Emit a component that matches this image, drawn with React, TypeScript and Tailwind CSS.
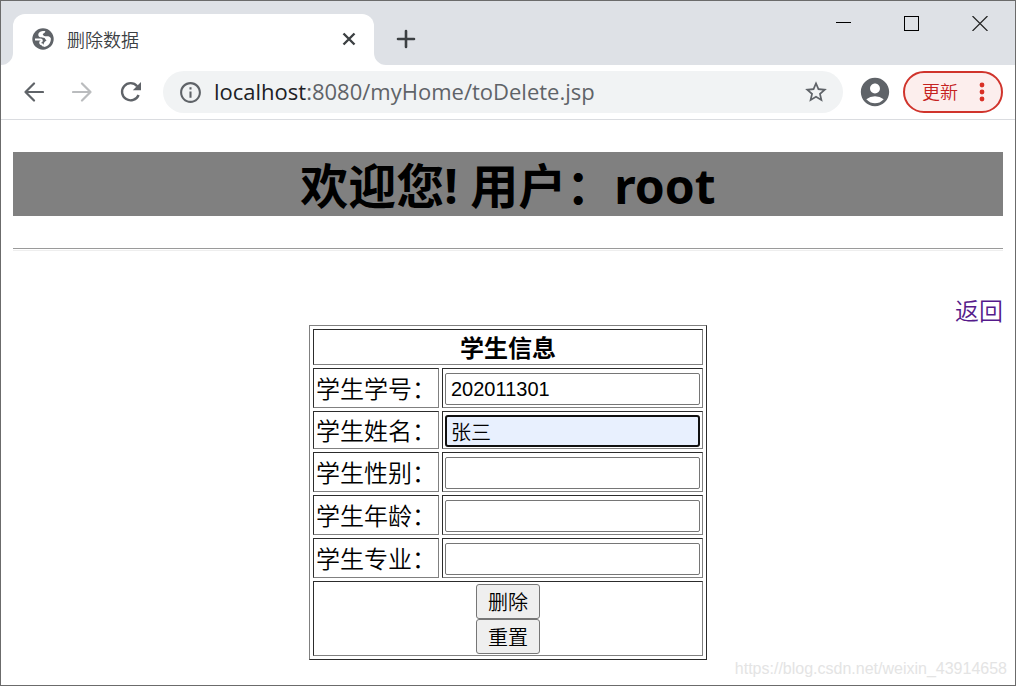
import React from 'react';
import { MdAccountCircle, MdInfoOutline, MdStarBorder } from 'react-icons/md';

interface Field {
  id: string;
  label: string;
  value: string;
  focused?: boolean;
}

const fields: Field[] = [
  { id: 'sno', label: '学生学号：', value: '202011301' },
  { id: 'sname', label: '学生姓名：', value: '张三', focused: true },
  { id: 'ssex', label: '学生性别：', value: '' },
  { id: 'sage', label: '学生年龄：', value: '' },
  { id: 'smajor', label: '学生专业：', value: '' },
];

const GlobeIcon = () => (
  <svg width="22" height="22" viewBox="0 0 22 22" aria-hidden="true">
    <circle cx="11" cy="11" r="10.7" fill="#5f6368" />
    <path d="M13.300 3.200C10 2.600 6.200 4.200 6.300 6.900C6.400 9.400 9.800 9.300 12 9.700C13.600 10 13 11.800 14.600 12.200C13.600 13.600 11.800 13.800 11.700 16L11.600 18.900C15.800 18.700 19 15.200 18.900 10.500C18.300 8.600 16.500 8.200 14.600 8.300C13 8.300 11 7.600 10.800 6.400C10.700 5 13.200 5.400 13.300 3.200Z" fill="#fff" />
    <path d="M2.900 10.600H8.400C10.400 10.600 11.300 12 10.600 13.400C10 14.400 8.600 14 8.600 15.200C8.700 16.600 10.400 16.300 10.600 18.900C6.200 18.700 2.800 15 2.900 10.600Z" fill="#5f6368" />
    <path d="M3 11.500H8.600C10.200 11.600 10.200 13.300 8.800 13.700C7.600 14.200 8.200 16 9.800 16.300L11.700 18" fill="none" stroke="#fff" strokeWidth="2" />
  </svg>
);

const ArrowIcon = ({ className }: { className: string }) => (
  <svg className={className} width="20" height="20" viewBox="0 0 20 20" fill="none" stroke="currentColor" strokeWidth="2.200" strokeLinecap="round" strokeLinejoin="round" aria-hidden="true">
    <path d="M19 10H1.500M10 1.500L1.500 10L10 18.500" />
  </svg>
);

const ReloadIcon = () => (
  <svg width="22" height="22" viewBox="0 0 22 22" aria-hidden="true">
    <path d="M17.200 5.200A8.600 8.600 0 1 0 18.600 14" fill="none" stroke="#5f6368" strokeWidth="2.400" />
    <path d="M21 1V9.200H12.800Z" fill="#5f6368" />
  </svg>
);

const TabStrip = () => (
  <header className="flex h-16 items-end bg-[#dee1e6]">
    <div className="relative ml-3 flex h-[51px] w-[361px] items-center rounded-t-xl bg-white pr-4 pb-0.5 pl-[19px]">
      <svg className="absolute bottom-0 -left-3" width="12" height="12" viewBox="0 0 12 12" aria-hidden="true">
        <path d="M12 0V12H0A12 12 0 0 0 12 0Z" fill="#fff" />
      </svg>
      <svg className="absolute -right-3 bottom-0" width="12" height="12" viewBox="0 0 12 12" aria-hidden="true">
        <path d="M0 0V12H12A12 12 0 0 1 0 0Z" fill="#fff" />
      </svg>
      <GlobeIcon />
      <span className="ml-[13px] flex-1 pt-0.5 text-lg font-[350] text-[#3c4043]">删除数据</span>
      <button type="button" aria-label="关闭标签页" className="p-0.5">
        <svg width="14" height="14" viewBox="0 0 14 14" stroke="#3c4043" strokeWidth="2.4" aria-hidden="true">
          <path d="M1.500 1.500L12.500 12.500M12.500 1.500L1.500 12.500" />
        </svg>
      </button>
    </div>
    <button type="button" aria-label="新标签页" className="ml-[21px] flex h-[51px] items-center pb-0.5">
      <svg width="22" height="22" viewBox="0 0 22 22" stroke="#3c4043" strokeWidth="2.600" strokeLinecap="round" aria-hidden="true">
        <path d="M11 3V19M3 11H19" />
      </svg>
    </button>
    <div className="ml-auto flex gap-[53px] self-start pt-[15px] pr-[27px]">
      <button type="button" aria-label="最小化">
        <svg width="16" height="15" viewBox="0 0 16 15" aria-hidden="true">
          <path d="M1 6.500H16" stroke="#000" />
        </svg>
      </button>
      <button type="button" aria-label="最大化">
        <svg width="15" height="15" viewBox="0 0 15 15" aria-hidden="true">
          <rect x="0.500" y="0.500" width="14" height="14" fill="none" stroke="#000" />
        </svg>
      </button>
      <button type="button" aria-label="关闭">
        <svg width="16" height="15" viewBox="0 0 16 15" aria-hidden="true">
          <path d="M0.500 0L15.500 15M15.500 0L0.500 15" stroke="#222" strokeWidth="1.200" />
        </svg>
      </button>
    </div>
  </header>
);

const Toolbar = () => (
  <nav className="flex h-[55px] items-center border-b border-[#dadce0] pr-3 pl-[23px] text-[#5f6368]">
    <button type="button" aria-label="后退">
      <ArrowIcon className="text-[#5f6368]" />
    </button>
    <button type="button" aria-label="前进" className="ml-7">
      <ArrowIcon className="rotate-180 text-[#babcbe]" />
    </button>
    <button type="button" aria-label="重新加载" className="ml-7">
      <ReloadIcon />
    </button>
    <div className="ml-[21px] flex h-[42px] flex-1 items-center rounded-full bg-[#f1f3f4] pr-[14px] pl-[15px]">
      <MdInfoOutline size={25} />
      <div className="ml-[11px] flex-1 pb-0.5 font-['Open_Sans',sans-serif] text-[22px] leading-8">
        <span className="text-[#202124]">localhost</span>:8080/myHome/toDelete.jsp
      </div>
      <button type="button" aria-label="收藏">
        <MdStarBorder size={26} />
      </button>
    </div>
    <MdAccountCircle className="ml-[15px]" size={34} />
    <button type="button" className="ml-[11px] flex h-[42px] w-[100px] items-center justify-between rounded-full border-2 border-[#d0342c] bg-[#fceeed] px-4 pl-[17px] text-lg font-[350] text-[#c5221f]">
      更新
      <svg width="6" height="20" viewBox="0 0 6 20" fill="#d93025" aria-hidden="true">
        <circle cx="3" cy="3" r="2.400" />
        <circle cx="3" cy="10" r="2.400" />
        <circle cx="3" cy="17" r="2.400" />
      </svg>
    </button>
  </nav>
);

// old-style border="1" look: dark top/left, grey bottom/right
const cell = 'border border-t-[#2c2c2c] border-l-[#2c2c2c] border-r-[#808080] border-b-[#808080]';

const FieldRow: React.FC<{ field: Field }> = ({ field }) => (
  <tr className={field.focused ? 'h-[38px]' : 'h-10'}>
    <td className={`${cell} px-0.5 pt-1`}>
      <label htmlFor={field.id} className="block leading-8 font-[350]">{field.label}</label>
    </td>
    <td className={`${cell} px-0.5 pt-[3px] pb-px`}>
      <input
        id={field.id}
        name={field.id}
        type="text"
        defaultValue={field.value}
        className={
          field.focused
            ? 'block h-8 w-[255px] rounded-[3px] border-2 border-[#101010] bg-[#e8f0fe] px-1 text-xl font-[350] outline-none'
            : 'block h-8 w-[255px] rounded-[2px] border border-[#767676] bg-white px-[5px] text-xl outline-none'
        }
      />
    </td>
  </tr>
);

const StudentForm = () => (
  <form className="flex justify-center" onSubmit={(e) => e.preventDefault()}>
    <table className="border-separate border-spacing-[3px] border border-t-[#808080] border-r-[#2c2c2c] border-b-[#2c2c2c] border-l-[#808080]">
      <thead>
        <tr>
          <th colSpan={2} className={`${cell} pt-0.5 leading-8`}>学生信息</th>
        </tr>
      </thead>
      <tbody className="font-['Liberation_Sans','Noto_Sans_CJK_SC',sans-serif]">
        {fields.map((field) => (
          <FieldRow key={field.id} field={field} />
        ))}
        <tr>
          <td colSpan={2} className={`${cell} pt-0.5 pb-px`}>
            <div className="flex flex-col items-center">
              <button type="submit" className="h-[35px] w-16 rounded-[3px] border border-[#767676] bg-[#efefef] pt-0.5 text-xl font-[350]">删除</button>
              <button type="reset" className="h-[35px] w-16 rounded-[3px] border border-[#767676] bg-[#efefef] pt-0.5 text-xl font-[350]">重置</button>
            </div>
          </td>
        </tr>
      </tbody>
    </table>
  </form>
);

export default function App() {
  return (
    <div className="relative min-h-screen border border-[#6b6b6b] bg-white font-['Noto_Sans','Noto_Sans_CJK_SC',sans-serif] text-black">
      <TabStrip />
      <Toolbar />
      <main className="px-3 pt-8 text-2xl">
        <h1 className="bg-[#808080] pt-1 text-center text-5xl leading-[60px] font-bold">欢迎您! 用户：root</h1>
        <hr className="mt-8 h-[3px] border-t border-b border-t-[#9a9a9a] border-b-[#eeeeee]" />
        <div className="mt-[42px] pt-1 text-right leading-7">
          <a href="#" className="font-[350] text-[#551a8b]">返回</a>
        </div>
        <StudentForm />
      </main>
      <div className="absolute right-2 bottom-1 font-['Liberation_Sans',sans-serif] text-base text-[#e4e4e4]">
        https://blog.csdn.net/weixin_43914658
      </div>
    </div>
  );
}
